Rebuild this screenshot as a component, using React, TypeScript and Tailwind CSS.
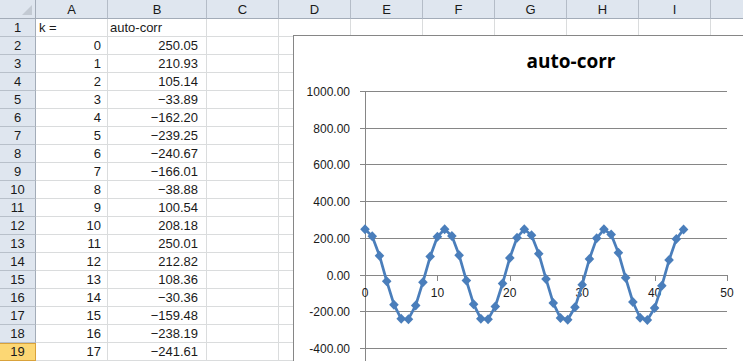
const columns = ['A', 'B', 'C', 'D', 'E', 'F', 'G', 'H', 'I', ''];
const colWidths = ['w-[72px]', 'w-[99px]', 'w-[72px]', 'w-[72px]', 'w-[72px]', 'w-[72px]', 'w-[72px]', 'w-[72px]', 'w-[72px]', 'w-[72px]'];

const values = [
  250.05, 210.93, 105.14, -33.89, -162.2, -239.25, -240.67, -166.01, -38.88,
  100.54, 208.18, 250.01, 212.82, 108.36, -30.36, -159.48, -238.19, -241.61,
];

const series = Array.from({ length: 45 }, (_, k) =>
  k < values.length ? values[k] : 250.05 * Math.cos(0.5689 * k)
);

const fmt = (v: number) => (v < 0 ? '\u2212' + Math.abs(v).toFixed(2) : v.toFixed(2));

const cellFont = "font-['Liberation_Sans','Noto_Sans_CJK_JP',sans-serif] text-[13px] text-[#1a1a1a]";

// chart scale, in page pixels
const X0 = 365;
const PX = 7.24;
const Y0 = 275;
const PY = 36.67 / 200;
const px = (k: number) => X0 + k * PX;
const py = (v: number) => Y0 - v * PY;
const crisp = (y: number) => Math.floor(y) + 0.5;

function Chart() {
  const ticks = [1000, 800, 600, 400, 200, 0, -200, -400];
  const line = series.map((v, k) => `${px(k).toFixed(1)},${py(v).toFixed(1)}`).join(' ');
  return (
    <div className="absolute left-[293px] top-[35px] w-[470px] h-[340px] bg-white border border-[#868686]">
      <svg className="absolute inset-0" width={470} height={340}>
        <g transform="translate(-294 -36)">
          <text x={571} y={68} textAnchor="middle" fontFamily="'Open Sans', sans-serif" fontWeight={700} fontSize={19} fill="#000">
            auto-corr
          </text>
          <line x1={360} x2={727} y1={crisp(py(-600))} y2={crisp(py(-600))} stroke="#868686" strokeWidth={1} />
          {ticks.map((t) => (
            <g key={t}>
              <line x1={360} x2={727} y1={crisp(py(t))} y2={crisp(py(t))} stroke="#868686" strokeWidth={1} />
              <text x={350} y={crisp(py(t)) + 4} textAnchor="end" fontFamily="'Liberation Sans', sans-serif" fontSize={12} fill="#1a1a1a">
                {t.toFixed(2)}
              </text>
            </g>
          ))}
          <line x1={365.5} x2={365.5} y1={crisp(py(1000))} y2={400} stroke="#868686" strokeWidth={1} />
          {[10, 20, 30, 40, 50].map((k) => (
            <line key={k} x1={Math.round(px(k)) + 0.5} x2={Math.round(px(k)) + 0.5} y1={275} y2={281} stroke="#868686" strokeWidth={1} />
          ))}
          {[0, 10, 20, 30, 40, 50].map((k) => (
            <text key={k} x={px(k)} y={297} textAnchor="middle" fontFamily="'Liberation Sans', sans-serif" fontSize={12} fill="#1a1a1a">
              {k}
            </text>
          ))}
          <polyline points={line} fill="none" stroke="#4A7EBB" strokeWidth={2.75} strokeLinejoin="round" strokeLinecap="round" />
          {series.map((v, k) => {
            const x = px(k);
            const y = py(v);
            return <polygon key={k} points={`${x},${y - 5} ${x + 4.8},${y} ${x},${y + 5} ${x - 4.8},${y}`} fill="#4A7EBB" />;
          })}
        </g>
      </svg>
    </div>
  );
}

export default function App() {
  const rows: [string, string][] = [['k =', 'auto-corr'], ...values.map((v, k) => [String(k), fmt(v)] as [string, string])];

  return (
    <div className={`relative w-[743px] h-[361px] overflow-hidden bg-white ${cellFont}`}>
      {/* Column headers */}
      <div className="flex">
        <div className="relative w-[36px] h-[19px] shrink-0 bg-[#DFE6EF] border-r border-b border-[#A3ACB8]">
          <svg className="absolute right-[3px] bottom-[3px]" width={10} height={10}>
            <polygon points="10,0 10,10 0,10" fill="#C3CAD3" />
          </svg>
        </div>
        {columns.map((c, i) => (
          <div
            key={i}
            className={`${colWidths[i]} h-[19px] shrink-0 flex items-center justify-center bg-[#DFE6EF] border-r border-b border-r-[#B4BCC7] border-b-[#A3ACB8] leading-none`}
          >
            {c}
          </div>
        ))}
      </div>

      {/* Rows */}
      {rows.map(([a, b], r) => {
        const active = r === 18;
        const isText = r === 0;
        return (
          <div key={r} className="flex">
            <div
              className={`w-[36px] h-[18px] shrink-0 flex items-center justify-center border-r border-b leading-none ${
                active
                  ? 'bg-[#FCD774] border-[#D9A23A] shadow-[inset_0_1px_0_#D9A23A]'
                  : 'bg-[#DFE6EF] border-r-[#A3ACB8] border-b-[#B8C0CA]'
              }`}
            >
              {r + 1}
            </div>
            <div
              className={`w-[72px] h-[18px] shrink-0 flex items-center border-r border-b border-[#DADCDD] leading-none ${
                isText ? 'justify-start pl-[3px]' : 'justify-end pr-[6px]'
              }`}
            >
              {a}
            </div>
            <div
              className={`w-[99px] h-[18px] shrink-0 flex items-center border-r border-b border-[#DADCDD] leading-none ${
                isText ? 'justify-start pl-[2px]' : 'justify-end pr-[8px]'
              }`}
            >
              {b}
            </div>
            {colWidths.slice(2).map((w, i) => (
              <div key={i} className={`${w} h-[18px] shrink-0 border-r border-b border-[#DADCDD]`} />
            ))}
          </div>
        );
      })}

      <Chart />
    </div>
  );
}
